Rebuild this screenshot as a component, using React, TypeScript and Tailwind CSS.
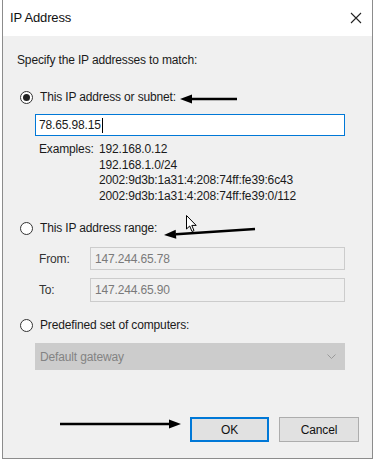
import React from "react";

const font = { fontFamily: '"Liberation Sans", Arial, sans-serif' };

function Radio({ checked }: { checked?: boolean }) {
  return (
    <span className="flex h-[13px] w-[13px] items-center justify-center rounded-full border border-[#333] bg-white">
      {checked && <span className="h-[7px] w-[7px] rounded-full bg-[#222]" />}
    </span>
  );
}

function Arrow({ x1, y1, x2, y2 }: { x1: number; y1: number; x2: number; y2: number }) {
  const a = Math.atan2(y2 - y1, x2 - x1);
  const l = 12;
  const w = 4.5;
  const bx = x2 - l * Math.cos(a);
  const by = y2 - l * Math.sin(a);
  const p1 = `${bx - w * Math.sin(a)},${by + w * Math.cos(a)}`;
  const p2 = `${bx + w * Math.sin(a)},${by - w * Math.cos(a)}`;
  return (
    <svg className="pointer-events-none absolute left-0 top-0" width={376} height={460}>
      <line x1={x1} y1={y1} x2={bx} y2={by} stroke="#000" strokeWidth={2.5} />
      <polygon points={`${x2},${y2} ${p1} ${p2}`} fill="#000" />
    </svg>
  );
}

export default function App() {
  return (
    <div className="relative h-[460px] w-[376px] overflow-hidden bg-white text-[12px] tracking-[-0.15px] text-[#1a1a1a]" style={font}>
      <div className="ml-[2px] flex h-[459px] w-[371px] flex-col border-x border-b border-[#8c8c8c]">
        <div className="flex h-[36px] items-center justify-between bg-white pl-[7px] pr-[10px]">
          <span className="text-[13px] text-[#111]">IP Address</span>
          <svg width="12" height="12" viewBox="0 0 12 12">
            <path d="M1 1 L11 11 M11 1 L1 11" stroke="#222" strokeWidth="1.1" />
          </svg>
        </div>
        <div className="flex flex-1 flex-col bg-[#f0f0f0] pl-[14px]">
          <div className="mt-[16px] h-[16px] leading-[16px]">Specify the IP addresses to match:</div>

          <div className="mt-[21px] flex h-[16px] items-center gap-[7px] pl-[3px]">
            <Radio checked />
            <span>This IP address or subnet:</span>
          </div>
          <div className="ml-[18px] mt-[9px] flex h-[22px] w-[310px] items-center border border-[#0078d7] bg-white pl-[3px]">
            78.65.98.15<span className="ml-[1px] h-[15px] w-px bg-black" />
          </div>
          <div className="ml-[22px] mt-[6px] flex leading-[15.5px]">
            <span className="w-[60px]">Examples:</span>
            <div className="flex flex-col">
              <span>192.168.0.12</span>
              <span>192.168.1.0/24</span>
              <span>2002:9d3b:1a31:4:208:74ff:fe39:6c43</span>
              <span>2002:9d3b:1a31:4:208:74ff:fe39:0/112</span>
            </div>
          </div>

          <div className="mt-[16px] flex h-[16px] items-center gap-[7px] pl-[3px]">
            <Radio />
            <span>This IP address range:</span>
          </div>
          <div className="mt-[11px] flex items-center">
            <span className="ml-[22px] w-[51px] text-[#333]">From:</span>
            <div className="flex h-[23px] w-[255px] items-center border border-[#cccccc] bg-[#f0f0f0] pl-[4px] text-[#7a7a7a]">
              147.244.65.78
            </div>
          </div>
          <div className="mt-[8px] flex items-center">
            <span className="ml-[22px] w-[51px] text-[#333]">To:</span>
            <div className="flex h-[24px] w-[255px] items-center border border-[#cccccc] bg-[#f0f0f0] pl-[4px] text-[#7a7a7a]">
              147.244.65.90
            </div>
          </div>

          <div className="mt-[15px] flex h-[16px] items-center gap-[7px] pl-[3px]">
            <Radio />
            <span>Predefined set of computers:</span>
          </div>
          <div className="ml-[18px] mt-[10px] flex h-[27px] w-[310px] items-center justify-between border border-[#cccccc] bg-[#cccccc] pl-[4px] pr-[8px] text-[#838383]">
            <span>Default gateway</span>
            <svg width="9" height="6" viewBox="0 0 9 6">
              <path d="M0.5 0.5 L4.5 4.5 L8.5 0.5" fill="none" stroke="#9a9a9a" strokeWidth="1" />
            </svg>
          </div>

          <div className="mr-[13px] mt-[47px] flex justify-end gap-[10px]">
            <button className="h-[25px] w-[79px] border-2 border-[#0078d7] bg-[#e1e1e1] text-[12px] text-[#111]" style={font}>
              OK
            </button>
            <button className="h-[25px] w-[80px] border border-[#adadad] bg-[#e1e1e1] text-[12px] text-[#111]" style={font}>
              Cancel
            </button>
          </div>
        </div>
      </div>

      <Arrow x1={237} y1={99} x2={180} y2={99} />
      <Arrow x1={255} y1={229} x2={164} y2={235} />
      <Arrow x1={60} y1={424} x2={181} y2={424} />

      <svg className="pointer-events-none absolute left-[186px] top-[215px]" width="12" height="18" viewBox="0 0 12 18">
        <path d="M0.5 0.5 L0.5 14 L3.7 11 L6 16.5 L8 15.6 L5.8 10.4 L10.2 10.4 Z" fill="#fff" stroke="#000" strokeWidth="1" />
      </svg>
    </div>
  );
}
